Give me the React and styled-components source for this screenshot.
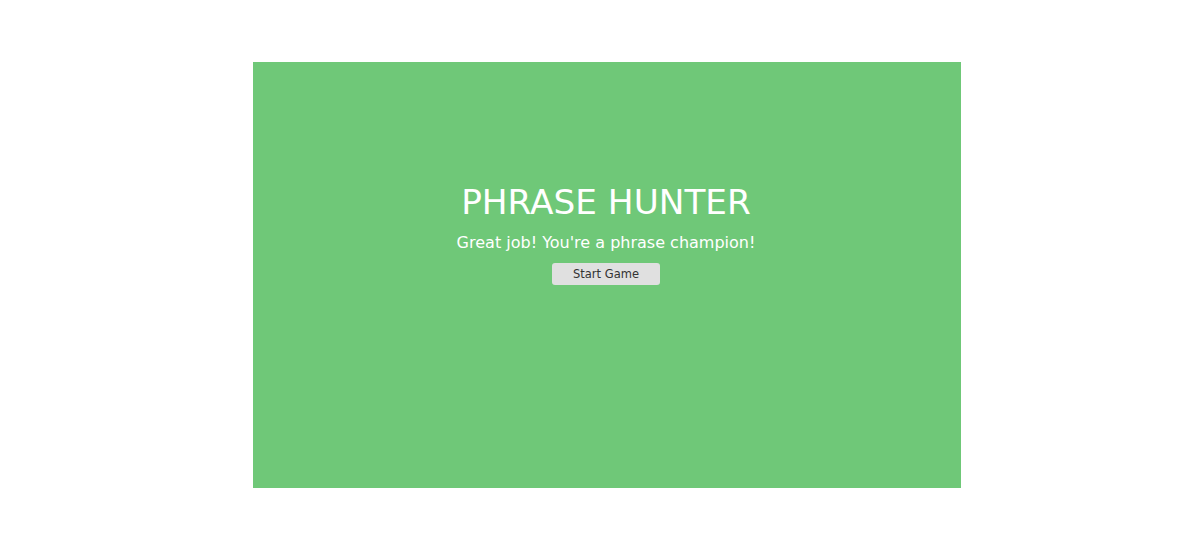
import React from "react";
import styled, { createGlobalStyle } from "styled-components";

const Global = createGlobalStyle`
  html, body { margin: 0; padding: 0; background: #fff; }
  body { font-family: "DejaVu Sans", "Open Sans", sans-serif; }
`;

const Page = styled.div`
  padding: 62px 0 0 253px;
`;

const Overlay = styled.main`
  width: 708px;
  height: 426px;
  background: #6fc878;
  display: flex;
  flex-direction: column;
  align-items: center;
  padding-top: 121px;
  padding-right: 2px;
  box-sizing: border-box;
  color: #fff;
`;

const Title = styled.h2`
  margin: 0;
  font-size: 34.3px;
  font-weight: 400;
  line-height: 38px;
`;

const Message = styled.h3`
  margin: 12px 0 0;
  font-size: 16px;
  font-weight: 400;
  line-height: 20px;
`;

const Button = styled.button`
  margin-top: 10px;
  width: 108px;
  height: 22px;
  border: none;
  border-radius: 3px;
  background: #e0e0e0;
  color: #333;
  font-family: "DejaVu Sans", sans-serif;
  font-size: 11.5px;
  padding: 0;
`;

export default function App() {
  return (
    <>
      <Global />
      <Page>
        <Overlay>
          <Title>PHRASE HUNTER</Title>
          <Message>Great job! You're a phrase champion!</Message>
          <Button>Start Game</Button>
        </Overlay>
      </Page>
    </>
  );
}
